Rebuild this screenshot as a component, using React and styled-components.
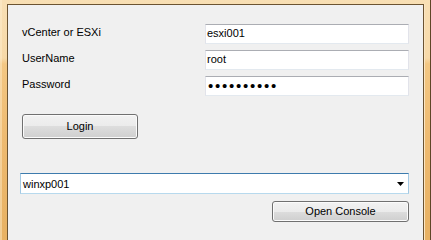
import React from "react";
import styled, { createGlobalStyle } from "styled-components";

const Global = createGlobalStyle`
  html, body { margin: 0; padding: 0; background: #f0f0f0; overflow: hidden; }
  body { font-family: "Liberation Sans", Arial, sans-serif; font-size: 11px; color: #000; }
  * { box-sizing: border-box; }
`;

const Window = styled.div`
  width: 431px;
  height: 100vh;
  min-height: 226px;
  padding: 4px 6px 0 7px;
  border-right: 1px solid #5e4627;
  background: linear-gradient(to bottom, #f8dfb4 0, #f7d9a8 58px, #f3c783 64px, #eeba70 140px, #e8b264 226px);
  box-shadow: inset 2px 0 0 rgba(255, 240, 210, 0.45);
  overflow: hidden;
  display: flex;
`;

const Client = styled.div`
  flex: 1;
  border: 1px solid #6b5331;
  border-bottom: none;
  background: #f0f0f0;
  box-shadow: 1px 0 0 #fbe6c4;
  padding: 19px 14px 0 12px;
  display: flex;
  flex-direction: column;
`;

const Form = styled.div`
  display: grid;
  grid-template-columns: 1fr 204px;
  grid-auto-rows: 20px;
  row-gap: 6px;
`;

const Label = styled.div`
  padding: 2px 0 0 2px;
  line-height: 13px;
  white-space: nowrap;
`;

const TextBox = styled.div`
  height: 20px;
  background: #fff;
  border: 1px solid #e2e3ea;
  border-top-color: #abadb3;
  border-bottom-color: #e3e9ef;
  padding: 2px 2px 0 1px;
  line-height: 13px;
  white-space: nowrap;
  overflow: hidden;
`;

const Mask = styled.span`
  display: block;
  font-size: 15px;
  line-height: 15px;
  letter-spacing: 1.75px;
  margin-top: -1px;
  margin-left: 1px;
`;

const Button = styled.div`
  width: ${(p) => p.$w}px;
  height: ${(p) => p.$h}px;
  border: 1px solid #707070;
  border-radius: 3px;
  background: linear-gradient(to bottom, #f2f2f2 0%, #ebebeb 50%, #dddddd 50%, #cfcfcf 100%);
  box-shadow: inset 0 0 0 1px #fbfbfb;
  display: flex;
  align-items: center;
  justify-content: center;
  line-height: 13px;
  white-space: nowrap;
`;

const LoginButton = styled(Button)`
  margin: 18px 0 0 2px;
`;

const Combo = styled.div`
  margin-top: 34px;
  height: 21px;
  background: #fff;
  border: 1px solid #a4c9e3;
  border-top-color: #3d7bad;
  border-bottom-color: #b7d9ed;
  display: flex;
  align-items: center;
  padding: 0 4px 0 2px;
  line-height: 13px;
`;

const ComboText = styled.span`
  flex: 1;
  padding-top: 1px;
`;

const Arrow = styled.svg`
  width: 7px;
  height: 4px;
  display: block;
  margin-top: 1px;
`;

const ConsoleButton = styled(Button)`
  margin-top: 7px;
  align-self: flex-end;
`;

export default function App() {
  return (
    <>
      <Global />
      <Window>
        <Client>
          <Form>
            <Label>vCenter or ESXi</Label>
            <TextBox>esxi001</TextBox>
            <Label>UserName</Label>
            <TextBox>root</TextBox>
            <Label>Password</Label>
            <TextBox>
              <Mask>{"\u2022".repeat(10)}</Mask>
            </TextBox>
          </Form>
          <LoginButton $w={116} $h={25}>Login</LoginButton>
          <Combo>
            <ComboText>winxp001</ComboText>
            <Arrow viewBox="0 0 7 4">
              <polygon points="0,0 7,0 3.5,4" fill="#000" />
            </Arrow>
          </Combo>
          <ConsoleButton $w={137} $h={21}>Open Console</ConsoleButton>
        </Client>
      </Window>
    </>
  );
}
